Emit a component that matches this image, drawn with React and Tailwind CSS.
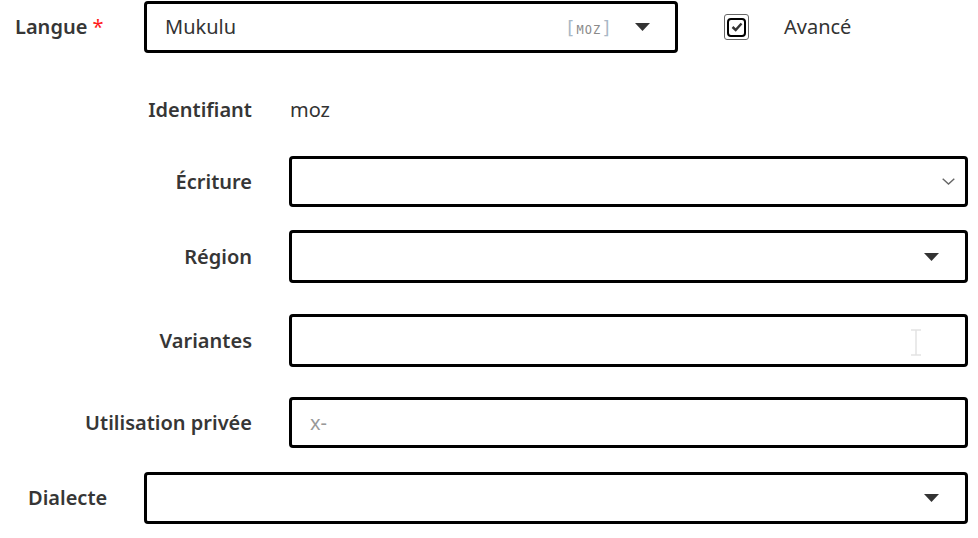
import React from "react"

const Caret = () => (
    <svg width="15" height="8" viewBox="0 0 15 8" className="shrink-0">
        <path d="M0 0 H15 L7.5 8 Z" fill="#333" />
    </svg>
)

function Field({ children, className = "" }) {
    return (
        <div className={`flex items-center border-[3px] border-black rounded-[4px] bg-white ${className}`}>
            {children}
        </div>
    )
}

function Row({ label, children, className = "" }) {
    return (
        <div className={`flex items-center ${className}`}>
            <div className="w-[252px] text-right font-semibold text-[#363636]">{label}</div>
            <div className="ml-[37px] flex-1">{children}</div>
        </div>
    )
}

export default function App() {
    return (
        <div className="w-[978px] h-[538px] bg-white text-[20px] overflow-hidden" style={{ fontFamily: '"Noto Sans", "Open Sans", sans-serif' }}>
            {/* Langue */}
            <div className="flex items-center pt-px">
                <div className="w-[144px] pl-[15px] font-semibold text-[#363636]">
                    Langue <span className="text-[#ff1a1a] font-normal">*</span>
                </div>
                <Field className="w-[534px] h-[52px] pl-[18px] pr-[25px]">
                    <span className="flex-1 text-[#333]">Mukulu</span>
                    <span className="text-[14px] mr-[22px] tracking-[1px]" style={{ fontFamily: '"DejaVu Sans Mono", monospace' }}>
                        <span className="text-[#a9b8c6] text-[18px]">[</span>
                        <span className="text-[#8a8a8a] text-[12px]">MOZ</span>
                        <span className="text-[#a9b8c6] text-[18px]">]</span>
                    </span>
                    <Caret />
                </Field>
                <div className="ml-[46px] w-[25px] h-[26px] border border-[#666] rounded-[3px] flex items-center justify-center">
                    <div className="w-[19px] h-[19px] border-[2.5px] border-black rounded-[4px] flex items-center justify-center">
                        <svg width="12" height="10" viewBox="0 0 12 10">
                            <path d="M1.5 5 L4.7 8 L10.5 1.5" fill="none" stroke="#333" strokeWidth="2.4" />
                        </svg>
                    </div>
                </div>
                <span className="ml-[35px] text-[#333]">Avancé</span>
            </div>

            {/* Identifiant */}
            <div className="flex items-center mt-[42px] h-[30px]">
                <div className="w-[252px] text-right font-semibold text-[#363636]">Identifiant</div>
                <span className="ml-[38px] text-[#333]">moz</span>
            </div>

            <Row label="Écriture" className="mt-[31px] mr-[10px]">
                <Field className="h-[51px] justify-end pr-[10px]">
                    <svg width="13" height="7" viewBox="0 0 13 7">
                        <path d="M0.7 0.7 L6.5 6 L12.3 0.7" fill="none" stroke="#666" strokeWidth="1.4" />
                    </svg>
                </Field>
            </Row>

            <Row label="Région" className="mt-[23px] mr-[10px]">
                <Field className="h-[53px] justify-end pr-[26px]">
                    <Caret />
                </Field>
            </Row>

            <Row label="Variantes" className="mt-[31px] mr-[10px]">
                <Field className="h-[53px] justify-end pr-[42px]">
                    <svg width="14" height="27" viewBox="0 0 14 27" className="mt-[4px]">
                        <path d="M2 1 H12 M7 1 V26 M2 26 H12" fill="none" stroke="#e3e3e3" strokeWidth="1.5" />
                    </svg>
                </Field>
            </Row>

            <Row label="Utilisation privée" className="mt-[30px] mr-[10px]">
                <Field className="h-[51px] pl-[18px]">
                    <span className="text-[#999]">x-</span>
                </Field>
            </Row>

            <div className="flex items-center mt-[24px] mr-[10px]">
                <div className="w-[144px] pl-[28px] font-semibold text-[#363636]">Dialecte</div>
                <Field className="flex-1 h-[52px] justify-end pr-[26px]">
                    <Caret />
                </Field>
            </div>
        </div>
    )
}
